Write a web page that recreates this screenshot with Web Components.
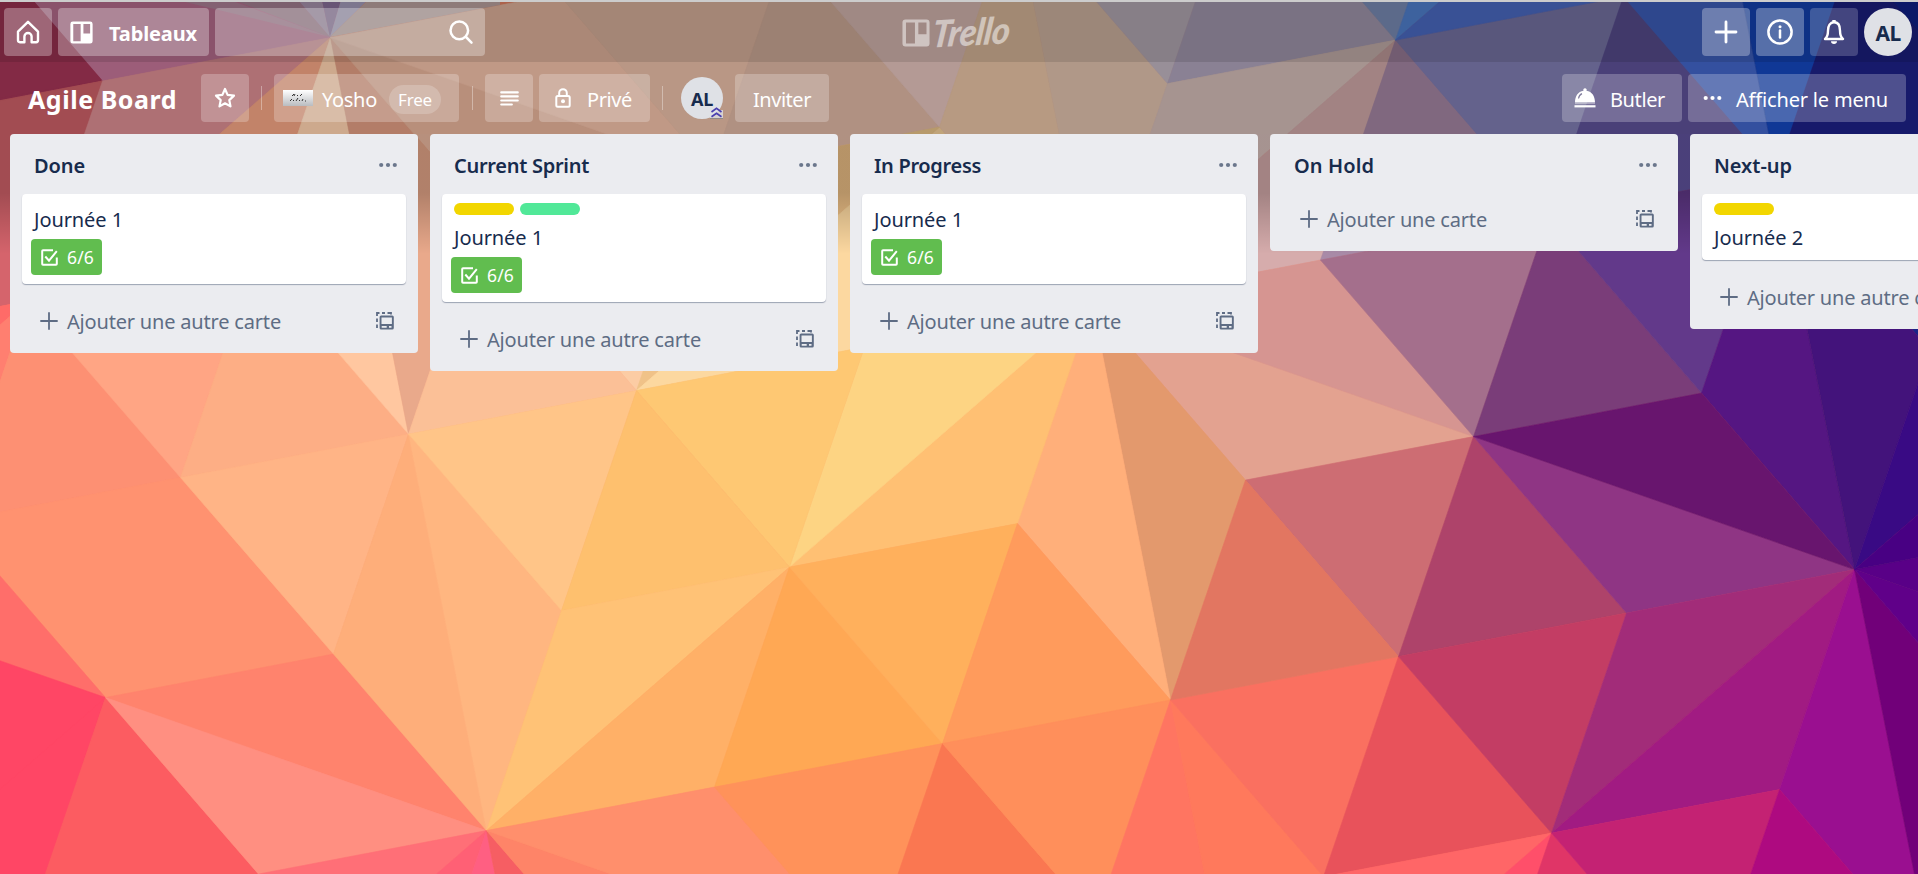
<!DOCTYPE html>
<html lang="fr">
<head>
<meta charset="utf-8">
<title>Agile Board | Trello</title>
<style>
html,body{margin:0;height:100%;overflow:hidden}
body{font-family:"Noto Sans","Open Sans",sans-serif;font-size:20px;color:#172b4d}
</style>
</head>
<body>
<board-app></board-app>
<script>
const define=(name,html,setup)=>{
  const t=document.createElement('template');t.innerHTML=html;
  customElements.define(name,class extends HTMLElement{
    connectedCallback(){
      if(this.shadowRoot)return;
      this.attachShadow({mode:'open'}).append(t.content.cloneNode(true));
      if(setup)setup(this,this.shadowRoot);
    }
  });
};

/* Text set to a known advance width through letter spacing */
define('fit-text',`<style>:host{display:inline-block;white-space:nowrap}span{display:inline-block}</style><span><slot></slot></span>`,(el,r)=>{
  const w=+el.getAttribute('w'),s=r.querySelector('span'),n=el.textContent.length;
  const nat=s.getBoundingClientRect().width;
  if(w&&nat){s.style.letterSpacing=((w-nat)/n)+'px';}
});

const ICONS={
 home:['0 0 24 24','<path d="M2 11.600 12 1.800l10 9.800v8.700q0 1.900-1.900 1.900h-4.500v-5.600a3.600 3.600 0 0 0-7.200 0v5.600H3.900Q2 22.200 2 20.300z" fill="none" stroke="currentColor" stroke-width="2.400" stroke-linejoin="round"/>'],
 board:['0 0 24 24','<path fill-rule="evenodd" fill="currentColor" d="M3 .5h18Q23.6.5 23.6 3v18q0 2.5-2.6 2.5H3Q.4 23.500.4 21V3Q.4.5 3 .5zM3.4 3v18h7.700V3zM14 3v10h7V3z"/>'],
 search:['0 0 24 24','<g fill="none" stroke="currentColor" stroke-width="2.500" stroke-linecap="round"><circle cx="10.300" cy="10.400" r="8.800"/><path d="m17 17 5.500 5.600"/></g>'],
 plus:['0 0 24 24','<path d="M12 2v20M2 12h20" stroke="currentColor" stroke-width="2.800" stroke-linecap="round"/>'],
 thin:['0 0 18 18','<path d="M9 .3v17.400M.3 9h17.400" stroke="currentColor" stroke-width="1.800"/>'],
 info:['0 0 26 26','<circle cx="13" cy="13" r="11.600" fill="none" stroke="currentColor" stroke-width="2.500"/><path d="M13 11.400v7" stroke="currentColor" stroke-width="2.500" stroke-linecap="round"/><circle cx="13" cy="7.800" r="1.500" fill="currentColor"/>'],
 bell:['0 0 22 26','<path d="M2 20c3-2.200 3-5 3-8.500C5 6.800 7 3.300 11 3.300s6 3.500 6 8.200c0 3.500 0 6.300 3 8.500z" fill="none" stroke="currentColor" stroke-width="2.400" stroke-linejoin="round"/><path d="M9.300 1h3.400v2.500H9.300zM8 22.200h6c0 1.700-1.200 2.700-3 2.700s-3-1-3-2.700z" fill="currentColor"/>'],
 star:['0 0 24 24','<path d="m12 3 2.600 5.900 6.400.7-4.700 4.500 1.200 6.300L12 17.300l-5.500 3.100 1.200-6.300L3 9.600l6.400-.7z" fill="none" stroke="currentColor" stroke-width="2.200" stroke-linejoin="round"/>'],
 lines:['0 0 20 16','<path d="M1.200 1.500h17.600M1.200 5.800h17.600M1.200 10.100h17.600M1.200 14.400h11.300" stroke="currentColor" stroke-width="2.300" stroke-linecap="round"/>'],
 lock:['0 0 16 20','<path d="M4.200 8.200V5a3.800 3.800 0 0 1 7.600 0v3.200" fill="none" stroke="currentColor" stroke-width="2"/><rect x="1.300" y="8" width="13.400" height="10.800" rx="1.500" fill="none" stroke="currentColor" stroke-width="2"/><circle cx="8" cy="13.200" r="2" fill="currentColor"/>'],
 butler:['0 0 22 20','<path fill="currentColor" d="M9.500 2.700a1.700 1.700 0 1 1 3 0C18 3.600 21 8.100 21 14.500H1C1 8.100 4 3.600 9.500 2.700z"/><path d="M4.500 10.500c.4-2.400 1.500-4 3.500-4.900" fill="none" stroke="#837f9f" stroke-width="1.200"/><rect y="17.200" x=".5" width="21" height="2.200" fill="currentColor"/><path d="M1 15.500h20" stroke="currentColor" opacity=".4" stroke-width="1.200"/>'],
 dots:['0 0 18 6','<g fill="currentColor"><circle cx="2.200" cy="3" r="2.100"/><circle cx="9" cy="3" r="2.100"/><circle cx="15.800" cy="3" r="2.100"/></g>'],
 check:['0 0 17 17','<path d="M12 1.200H2Q1.200 1.200 1.200 2v13q0 .8.800.8h13q.8 0 .8-.8V8.500M4.300 7.500l3.700 4.200L15.800 2.200" fill="none" stroke="currentColor" stroke-width="2"/>'],
 template:['0 0 18 18','<path d="M1 16V12.500M1 10V6.500M1 4V1h2.500M6 1h3M11.500 1H15v1.500" fill="none" stroke="currentColor" stroke-width="1.800"/><path fill="currentColor" fill-rule="evenodd" d="M5.200 3.500h11q1.600 0 1.600 1.600v10.800q0 1.600-1.600 1.600h-11q-1.600 0-1.600-1.600V5.100q0-1.600 1.600-1.600zM5.500 5.400v6.500h10.400V5.400zM5.700 14v1.700h5V14zM13 14v1.700h2.500V14z"/>']
};
define('ui-icon',`<style>:host{display:block;flex:none}svg{display:block;width:100%;height:100%;overflow:visible}</style>`,(el,r)=>{
  const i=ICONS[el.getAttribute('name')],s=el.getAttribute('size').split('x');
  el.style.width=s[0]+'px';el.style.height=(s[1]||s[0])+'px';
  r.innerHTML+=`<svg viewBox="${i[0]}">${i[1]}</svg>`;
});

define('ui-button',`<style>:host{display:flex;align-items:center;box-sizing:border-box;height:48px;border-radius:4px;background:rgba(255,255,255,.3);color:#fff;flex:none}
:host([square]){width:48px;justify-content:center}:host([dim]){background:rgba(255,255,255,.2)}:host([soft]){background:rgba(255,255,255,.24)}</style><slot></slot>`);

define('user-avatar',`<style>:host{display:flex;align-items:center;justify-content:center;border-radius:50%;background:#dfe1e6;color:#172b4d;font-weight:700;position:relative;flex:none;width:48px;height:48px;font-size:21px}
:host([small]){width:42px;height:42px;font-size:18px}.b{display:none;position:absolute;right:0;bottom:0;width:13px;height:12px}:host([small]) .b{display:block}fit-text,::slotted(*){margin-top:1px}</style>
<slot></slot><svg class="b" viewBox="0 0 13 12"><path d="M0 11.500V8L6 3l7 0v8.500z" fill="#dfe1e6" opacity=".8"/><path d="m1.500 5 5-3.600 5 3.600M1.500 9.800l5-3.600 5 3.600" fill="none" stroke="#4a3fb0" stroke-width="1.700"/><path d="M0 11.600h13" stroke="#777" stroke-width=".8"/></svg>`);

/* Wallpaper: triangles on a skewed lattice */
define('poly-wallpaper',`<style>:host{display:block;position:absolute;inset:0;z-index:-1;overflow:hidden}svg{display:block}</style>`,(el,r)=>{
  const P=(i,j)=>[486.5+228*i+153*j,830.6-43.5*i+176.5*j];
  const draw=list=>list.map(row=>{
    const [c,...v]=row.split(' ');
    const pts=v.map(s=>{const[a,b]=s.split(',').map(Number);return P(a,b).join(',')}).join(' ');
    return `<polygon points="${pts}" fill="#${c}" stroke="#${c}" stroke-width=".6"/>`;
  }).join('');
  const lower=[
  'd5646c -2,-3 1,-5 1,-4 0,-3','e6939a 1,-4 2,-4 0,-3','ff6b68 -1,-3 0,-3 -2,-2','ff7f70 0,-3 -1,-2 -2,-2',
  'ffac8a 2,-4 0,-3 1,-3','fd9073 0,-3 0,-2 -1,-2','ffa584 0,-3 1,-3 0,-2','fdae85 1,-3 1,-2 0,-2',
  'ffc7a0 2,-4 1,-3 1,-2','f1bda4 2,-4 3,-3 2,-3','e9a98b 2,-4 2,-3 1,-2',
  'e7bfab 3,-4 5,-4 4,-3 3,-3','fccca4 2,-3 3,-3 4,-3 2,-2','f0c288 3,-3 4,-3 2,-2','fcd8a0 2,-2 4,-3 4,-2 3,-2',
  'dac2be 5,-3 6,-3 4,-2','d6acac 6,-3 5,-2 4,-2','a88aa7 6,-3 6,-2 5,-2','8380b8 6,-3 7,-3 6,-2','6254a0 7,-3 7,-2 6,-2','1b2488 7,-2 8,-3 8,-2 7,-1',
  'e3a290 4,-2 5,-1 4,-1','d69591 4,-2 5,-2 5,-1','a46f8c 5,-2 6,-2 5,-1','7a3d79 6,-2 6,-1 5,-1','62398a 6,-2 7,-2 6,-1','551682 7,-2 6,0 6,-1','43137b 7,-2 7,-1 6,0','390a84 7,-1 8,-1 6,0',
  'e3996d 4,-2 4,-1 3,0','ffaf7a 4,-2 3,0 3,-1','ffc073 4,-2 3,-1 2,-1','fdd483 3,-2 4,-2 2,-1','fec873 2,-2 3,-2 2,-1',
  'fbc097 1,-2 2,-3 2,-2','ff9270 -1,-2 0,-2 0,-1 -1,-1',
  'ff6e6a -2,-2 -1,-2 -1,-1','ff4665 -2,-2 -1,-1 -2,0 -3,0','ff4665 -1,-1 -2,0 -2,1 -3,1 -3,0','fc5c61 -1,-1 -1,0 -2,0','fc5c61 -1,0 -2,0 -2,1','ff836d -1,-1 0,-1 0,0','ff8f81 -1,-1 0,0 -1,0',
  'ffb486 0,-2 1,-2 0,-1','feae7a 1,-2 0,-1 0,0','ffb680 1,-2 1,-1 0,0','ffc588 1,-2 2,-2 1,-1','fec06e 2,-2 2,-1 1,-1','ffc276 1,-1 2,-1 0,0','ffb067 2,-1 0,0 1,0','ffa854 2,-1 1,0 2,0','ffb05c 2,-1 3,-1 2,0','ff9b5c 3,-1 3,0 2,0',
  'ff6f77 -1,0 0,0 -2,1','ff6075 0,0 -2,1 -1,1','ff5f82 0,0 -1,1 -1,2','f65e63 0,0 -1,2 0,1','fe8468 0,0 0,1 1,1','ff8f6c 0,0 1,1 1,0','ff925a 1,0 2,0 1,1','fa7751 2,0 1,1 2,1','ff8f5b 2,0 3,0 2,1','ff7561 3,0 2,1 2,2','ff795c 3,0 2,2 3,1','fa7060 3,0 4,0 3,1','e8525b 4,0 4,1 3,1',
  'cd6d73 5,-1 4,-1 4,0','e27661 4,-1 3,0 4,0','ae436a 5,-1 4,0 5,0','c33d64 4,0 5,0 4,1','8f3584 5,-1 5,0 6,0','68156e 5,-1 6,-1 6,0','a22c79 5,0 6,0 4,1','a11b82 4,1 6,0 5,1',
  '9a0f90 6,0 5,1 5,2','710079 6,0 5,2 6,1','600089 6,0 6,1 7,1','590087 6,0 7,1 7,0','480083 6,0 7,0 8,-1',
  'ff6667 4,1 3,1 2,2','ff4f6a 4,1 2,2 3,2','e03567 4,1 3,2 4,2','c42273 4,1 5,1 4,2','ae0a80 5,1 4,2 5,2'];
  const top=[
  '832a45 -2,-3 -1,-5 1,-5 1,-4','9c5d79 1,-5 3,-5 2,-4 1,-4','a24c52 -1,-4 1,-4 0,-3 -2,-3','a24c52 1,-4 0,-4 -2,-3 0,-3','ae7074 1,-4 2,-4 0,-3','c28369 2,-4 1,-3 0,-3','cda98d 2,-4 1,-2 1,-3','b37d68 2,-4 2,-3 1,-2','b88f7b 2,-4 3,-3 2,-3','c09986 2,-4 3,-4 3,-3',
  'b99785 3,-4 4,-4 3,-3','b09182 4,-4 4,-3 3,-3','b49a95 4,-4 5,-4 4,-3','b79a6c 3,-3 4,-3 2,-2','b79a82 5,-4 4,-2 4,-3','b09888 5,-4 5,-3 4,-2','988f98 5,-4 6,-4 5,-3','8a8194 6,-4 6,-3 5,-3','a69490 5,-3 6,-3 4,-2','a28383 6,-3 5,-2 4,-2','80687f 6,-3 6,-2 5,-2','64628c 6,-3 7,-3 6,-2','68789c 6,-4 7,-4 6,-3','456fb2 7,-4 6,-3 8,-4','405ba8 8,-4 7,-3 6,-3',
  '4a4078 7,-3 7,-2 6,-2','34509f 7,-3 7,-4 8,-4 7,-2','103896 8,-4 8,-3 7,-2','171a6b 8,-3 8,-2 7,-2','0d1b74 8,-3 9,-3 8,-2'];
  // fan of rays leaving the vertex near the search field
  const fan=(c,pts)=>`<polygon points="${pts}" fill="#${c}"/>`;
  const rays=fan('946d80','330,37 230,0 170,-23 177,0')+fan('8c6c7c','330,37 298,0 233,0')+fan('8f7d94','330,37 322,0 298,0')+fan('756084','330,37 322,0 341,0')+fan('8d86a0','330,37 341,0 368,0')+fan('a08b88','330,37 368,0 500,0 500,5');
  r.innerHTML+=`<svg width="1918" height="874" viewBox="0 0 1918 874"><defs><linearGradient id="g" x1="0" y1="0" x2="0" y2="1"><stop offset="0" stop-opacity=".24"/><stop offset=".76" stop-opacity=".24"/><stop offset="1" stop-opacity="0"/></linearGradient><clipPath id="c"><path d="M0 0h1918v134H0z"/></clipPath></defs>
  <rect width="1918" height="874" fill="#ff9270"/>${draw(lower)}<rect width="1918" height="254" fill="url(#g)"/><g clip-path="url(#c)">${draw(top)}${rays}${fan('832a45','0,0 33,0 102,80 0,98')}</g></svg>`;
});

define('app-header',`<style>:host{display:grid;grid-template-columns:1fr auto 1fr;align-items:center;box-sizing:border-box;height:62px;padding:0 6px 0 4px;border-top:2px solid #ccc;background:rgba(0,0,0,.11);color:#fff}
.g{display:flex;gap:6px;align-items:center}.r{justify-content:flex-end}
.t{padding:0 12px;gap:16px;width:151px;font-weight:700}.t fit-text{margin-top:2px}.s{width:270px;justify-content:flex-end;padding-right:12px}
.logo{display:flex;align-items:center;gap:0;opacity:.5;margin-left:1px}.logo ui-icon{margin-top:2px}.logo b{display:block;width:85px;font:italic 900 34px/34px Lato,sans-serif;transform:translate(2px,-1px) skewX(-10deg) rotate(-3deg) scaleY(1.100)}
.logo b fit-text{margin-left:1px}</style>
<div class="g"><ui-button square><ui-icon name="home" size="24"></ui-icon></ui-button>
<ui-button class="t"><ui-icon name="board" size="23"></ui-icon><fit-text w="88">Tableaux</fit-text></ui-button>
<ui-button class="s"><ui-icon name="search" size="24"></ui-icon></ui-button></div>
<div class="logo"><ui-icon name="board" size="28"></ui-icon><b><fit-text w="82">Trello</fit-text></b></div>
<div class="g r"><ui-button square><ui-icon name="plus" size="24"></ui-icon></ui-button><ui-button square><ui-icon name="info" size="26"></ui-icon></ui-button><ui-button square dim><ui-icon name="bell" size="22x26"></ui-icon></ui-button><user-avatar><fit-text w="25">AL</fit-text></user-avatar></div>`);

define('board-bar',`<style>:host{display:flex;align-items:center;height:48px;padding:12px 12px 12px 28px;color:#fff}
h1{margin:0 25px 0 0;padding-top:2px;font-size:25px;font-weight:700;line-height:46px;width:148px}
i{width:1px;height:24px;background:rgba(255,255,255,.35);margin:0 12px}.ws+i{margin-left:13px}
ui-button>fit-text{margin-top:3px}
.ws{width:185px;padding-left:9px}.ws svg{margin-right:9px}.pill{margin:3px 0 0 12px;width:52px;height:29px;border-radius:15px;background:rgba(255,255,255,.2);font-size:17px;display:flex;align-items:center;justify-content:center}
.p{width:111px;margin-left:6px;padding-left:16px;gap:16px}.inv{width:94px;justify-content:center;margin-left:12px}
.bt{margin-left:auto;width:120px;padding-left:12px;gap:14px}.m{width:218px;margin-left:6px;padding-left:15px;gap:14px}</style>
<h1><fit-text w="149">Agile Board</fit-text></h1>
<ui-button square soft><ui-icon name="star" size="24"></ui-icon></ui-button><i></i>
<ui-button class="ws" soft><svg width="30" height="16"><defs><linearGradient id="w" x2="0" y2="1"><stop stop-color="#fff"/><stop offset="1" stop-color="#b9bcc0"/></linearGradient></defs><rect width="30" height="16" fill="url(#w)"/><path d="m9 6 2-2m0 2 1-2m2 2 1-1m2 1 2-2M7 11l2-2m1 2 1-1m2 1 2-3m1 3 1-1m2 1 1-2m2 2h1" stroke="#333" stroke-width="1" fill="none"/></svg><fit-text w="55">Yosho</fit-text><span class="pill"><fit-text w="34">Free</fit-text></span></ui-button><i></i>
<ui-button square soft><ui-icon name="lines" size="19x15"></ui-icon></ui-button>
<ui-button class="p" soft><ui-icon name="lock" size="16x20"></ui-icon><fit-text w="45">Privé</fit-text></ui-button><i></i>
<user-avatar small style="margin-left:6px"><fit-text w="22">AL</fit-text></user-avatar>
<ui-button class="inv" soft><fit-text w="58">Inviter</fit-text></ui-button>
<ui-button class="bt" soft><ui-icon name="butler" size="22x20"></ui-icon><fit-text w="55">Butler</fit-text></ui-button>
<ui-button class="m" soft><ui-icon name="dots" size="19x6"></ui-icon><fit-text w="152">Afficher le menu</fit-text></ui-button>`);

define('list-card',`<style>:host{display:block;box-sizing:border-box;margin:0 12px 12px;padding:9px 12px 3px;background:#fff;border-radius:4px;box-shadow:0 1px 1px rgba(9,30,66,.35)}
.l{display:flex;gap:6px;height:12px;margin-bottom:6px}.l span{width:60px;border-radius:6px}
.t{height:34px;line-height:34px;margin-bottom:2px}
.b{display:flex;align-items:center;box-sizing:border-box;width:71px;height:36px;margin:0 0 6px -3px;padding-left:10px;gap:9px;border-radius:4px;background:#61bd4f;color:#fff;font-size:17.500px}</style>
<div class="l"></div><div class="t"></div><div class="b"><ui-icon name="check" size="17"></ui-icon></div>`,(el,r)=>{
  const l=r.querySelector('.l'),c=el.getAttribute('labels');
  if(c)l.innerHTML=c.split(' ').map(x=>`<span style="background:${x}"></span>`).join('');else l.remove();
  r.querySelector('.t').innerHTML=`<fit-text w="89">${el.getAttribute('name')}</fit-text>`;
  const b=r.querySelector('.b'),n=el.getAttribute('badge');
  if(n)b.insertAdjacentHTML('beforeend',`<fit-text w="27">${n}</fit-text>`);else b.remove();
});

define('board-list',`<style>:host{display:block;flex:none;width:408px;background:#ebecf0;border-radius:4px}
header{display:flex;align-items:center;justify-content:space-between;height:60px;padding:0 21px 0 24px;box-sizing:border-box;font-weight:600}
header fit-text{margin-top:2px}header ui-icon{color:#6b778c;margin-top:2px}
footer{display:flex;align-items:center;height:50px;margin-bottom:7px;padding:0 24px 0 30px;color:#5e6c84}
footer fit-text{margin:1px auto 0 9px}</style>
<header></header><slot></slot><footer><ui-icon name="thin" size="18"></ui-icon></footer>`,(el,r)=>{
  const a=n=>el.getAttribute(n);
  r.querySelector('header').innerHTML=`<fit-text w="${a('w')}">${a('name')}</fit-text><ui-icon name="dots" size="18x6"></ui-icon>`;
  const e=a('empty')!==null;
  r.querySelector('footer').insertAdjacentHTML('beforeend',`<fit-text w="${e?160:214}">${e?'Ajouter une carte':'Ajouter une autre carte'}</fit-text><ui-icon name="template" size="18"></ui-icon>`);
});

define('board-app',`<style>:host{display:flex;flex-direction:column;position:relative;z-index:0;width:1918px;height:874px;overflow:hidden}
main{display:flex;gap:12px;align-items:flex-start;padding:0 10px}</style>
<poly-wallpaper></poly-wallpaper><app-header></app-header><board-bar></board-bar>
<main>
<board-list name="Done" w="51"><list-card name="Journée 1" badge="6/6"></list-card></board-list>
<board-list name="Current Sprint" w="135"><list-card labels="#f2d600 #51e898" name="Journée 1" badge="6/6"></list-card></board-list>
<board-list name="In Progress" w="107"><list-card name="Journée 1" badge="6/6"></list-card></board-list>
<board-list name="On Hold" w="80" empty></board-list>
<board-list name="Next-up" w="78"><list-card labels="#f2d600" name="Journée 2"></list-card></board-list>
</main>`);
</script>
</body>
</html>
